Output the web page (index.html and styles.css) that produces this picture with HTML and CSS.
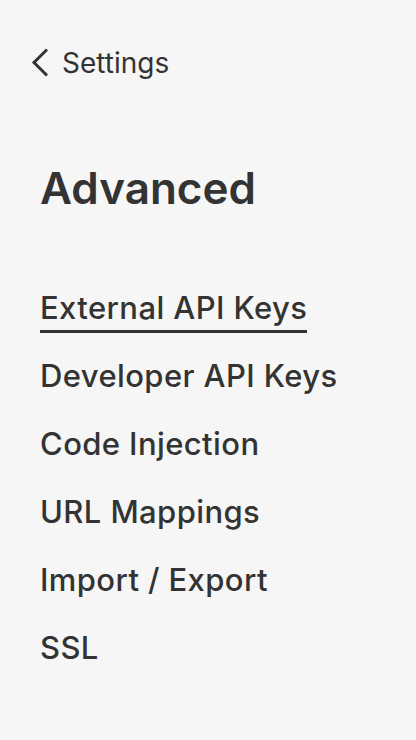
FILE: index.html
```html
<!DOCTYPE html>
<html>
<head>
<meta charset="utf-8">
<link rel="stylesheet" href="styles.css">
</head>
<body>
<div class="page">
  <a class="back" href="#">
    <svg class="chev" width="20" height="30" viewBox="0 0 20 30"><path d="M17 1.5 L4 14.5 L17 27.5" fill="none" stroke="#333" stroke-width="3"/></svg>
    <span>Settings</span>
  </a>
  <h1 class="title">Advanced</h1>
  <nav class="menu">
    <a class="item active" href="#">External API Keys</a>
    <a class="item" href="#">Developer API Keys</a>
    <a class="item" href="#">Code Injection</a>
    <a class="item" href="#">URL Mappings</a>
    <a class="item" href="#">Import / Export</a>
    <a class="item" href="#">SSL</a>
  </nav>
</div>
</body>
</html>
```
FILE: styles.css
```css
html, body { margin: 0; padding: 0; background: #f6f6f6; }
body { font-family: Inter, "Noto Sans", sans-serif; color: #333; }
.page { padding: 48px 40px 0 30px; }
.back { display: flex; align-items: center; gap: 12px; text-decoration: none; color: #333; font-size: 28px; line-height: 30px; height: 30px; }
.chev { display: block; }
.title { margin: 85px 0 0 10px; font-size: 44px; font-weight: 600; line-height: 50px; letter-spacing: 0; }
.menu { display: flex; flex-direction: column; align-items: flex-start; margin: 76px 0 0 10px; gap: 24px; }
.item { text-decoration: none; color: #333; font-size: 31px; font-weight: 500; line-height: 38px; letter-spacing: 0.4px; padding-bottom: 3px; border-bottom: 3px solid transparent; }
.item.active { border-bottom-color: #333; }
```
